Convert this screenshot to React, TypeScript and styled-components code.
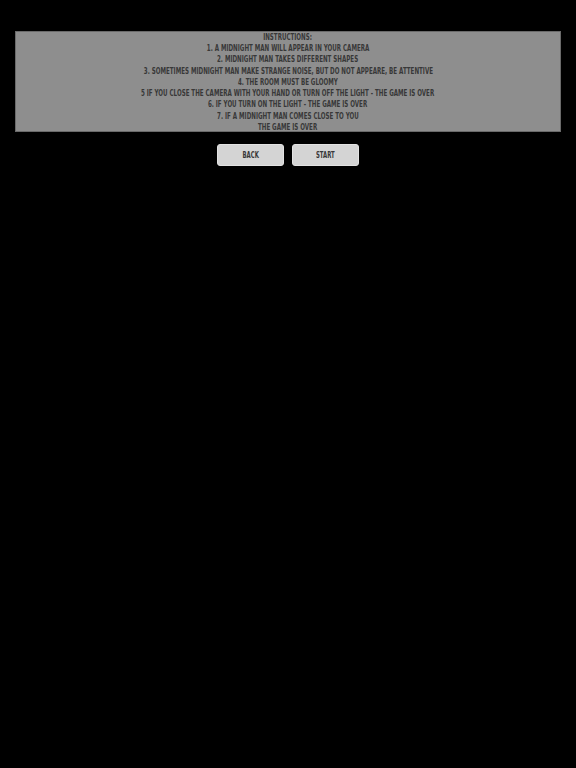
import styled, { createGlobalStyle } from "styled-components";

const GlobalStyle = createGlobalStyle`
  html, body {
    margin: 0;
    padding: 0;
    background: #000;
  }
  body {
    font-family: "DejaVu Sans Condensed", "Liberation Sans Narrow", "Liberation Sans", sans-serif;
  }
`;

const rules: string[] = [
  "INSTRUCTIONS:",
  "1. A MIDNIGHT MAN WILL APPEAR IN YOUR CAMERA",
  "2. MIDNIGHT MAN TAKES DIFFERENT SHAPES",
  "3. SOMETIMES MIDNIGHT MAN MAKE STRANGE NOISE, BUT DO NOT APPEARE, BE ATTENTIVE",
  "4. THE ROOM MUST BE GLOOMY",
  "5 IF YOU CLOSE THE CAMERA WITH YOUR HAND OR TURN OFF THE LIGHT - THE GAME IS OVER",
  "6. IF YOU TURN ON THE LIGHT - THE GAME IS OVER",
  "7. IF A MIDNIGHT MAN COMES CLOSE TO YOU",
  "THE GAME IS OVER",
];

const App: React.FC = () => {
  return (
    <Screen>
      <GlobalStyle />
      <Panel>
        {rules.map((line, i) => (
          <Line key={i}>{line}</Line>
        ))}
      </Panel>
      <Buttons>
        <Button>
          <Label>BACK</Label>
        </Button>
        <Button>
          <Label>START</Label>
        </Button>
      </Buttons>
    </Screen>
  );
};
export default App;

const Screen = styled.div`
  min-height: 768px;
  background: #000;
  padding: 31px 15px 0;
  box-sizing: border-box;
  display: flex;
  flex-direction: column;
  align-items: center;
`;

const Panel = styled.div`
  width: 100%;
  height: 101px;
  box-sizing: border-box;
  background: #8e8e8e;
  border: 1px solid #6a6a6a;
  display: flex;
  flex-direction: column;
  align-items: center;
  justify-content: center;
  overflow: visible;
`;

const Line = styled.div`
  flex: none;
  font-size: 9.5px;
  line-height: 11.25px;
  font-weight: bold;
  color: #383838;
  white-space: nowrap;
  transform: scaleX(0.65);
`;

const Buttons = styled.div`
  display: flex;
  gap: 8px;
  margin-top: 12px;
`;

const Button = styled.button`
  width: 67px;
  height: 22px;
  border: 1px solid #e2e2e2;
  border-radius: 3px;
  background: #d4d4d4;
  color: #383838;
  font-family: "DejaVu Sans Condensed", "Liberation Sans Narrow", sans-serif;
  font-weight: bold;
  font-size: 8.5px;
  padding: 0;
  display: flex;
  align-items: center;
  justify-content: center;
  cursor: pointer;
`;

const Label = styled.span`
  display: inline-block;
  transform: scaleX(0.7);
`;
